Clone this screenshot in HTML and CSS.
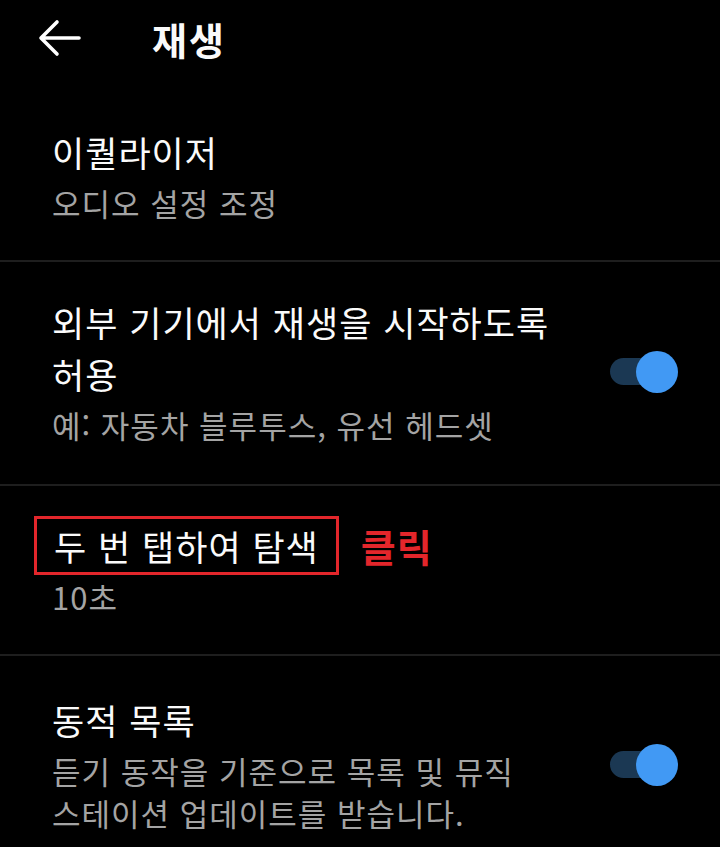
FILE: index.html
```html
<!DOCTYPE html>
<html lang="ko">
<head>
<meta charset="utf-8">
<meta name="viewport" content="width=device-width, initial-scale=1">
<link rel="stylesheet" href="styles.css">
</head>
<body>
    <div class="header">
        <svg class="back" width="44" height="40" viewBox="0 0 44 40">
            <path d="M41 20 H4 M19 4 L3 20 L19 36" fill="none" stroke="#fff" stroke-width="3.6" stroke-linecap="round" stroke-linejoin="round"/>
        </svg>
        <h1 class="title">재생</h1>
    </div>

    <div class="row first">
        <div class="text">
            <div class="name">이퀄라이저</div>
            <div class="sub">오디오 설정 조정</div>
        </div>
    </div>

    <div class="row wide">
        <div class="text">
            <div class="name">외부 기기에서 재생을 시작하도록<br>허용</div>
            <div class="sub">예: 자동차 블루투스, 유선 헤드셋</div>
        </div>
        <div class="toggle"><span class="knob"></span></div>
    </div>

    <div class="row">
        <div class="text">
            <div class="name"><span class="mark">두 번 탭하여 탐색</span><span class="click">클릭</span></div>
            <div class="sub">10초</div>
        </div>
    </div>

    <div class="row last">
        <div class="text">
            <div class="name">동적 목록</div>
            <div class="sub">듣기 동작을 기준으로 목록 및 뮤직<br>스테이션 업데이트를 받습니다.</div>
        </div>
        <div class="toggle"><span class="knob"></span></div>
    </div>
</body>
</html>
```

FILE: styles.css
```css
body{
    margin: 0;
    background-color: #000;
    color: #fafafa;
    font-family: "Noto Sans CJK KR", "Noto Sans", sans-serif;
    width: 720px;
    height: 847px;
    overflow: hidden;
}

.header{
    height: 80px;
    display: flex;
    align-items: center;
}
.back{
    margin-left: 38px;
    margin-top: -4px;
}
.title{
    margin: -3px 0 0 70px;
    font-size: 38px;
    font-weight: bold;
    letter-spacing: 2px;
    line-height: 1;
}

.row{
    display: flex;
    align-items: center;
    padding: 34px 50px 36px 52px;
    border-top: 2px solid #1e1e1e;
}
.row.first{
    border-top: none;
    padding-top: 46px;
}
.row.wide{
    padding-bottom: 38px;
}
.row.last{
    padding-top: 38px;
}
.text{
    flex: 1;
}
.name{
    font-size: 35px;
    letter-spacing: 1px;
    line-height: 52px;
}
.sub{
    font-size: 31px;
    letter-spacing: 1px;
    line-height: 42px;
    color: #a4a4a4;
    margin-top: 4px;
}

.mark{
    display: inline-block;
    border: 3px solid #e3262b;
    line-height: 53px;
    padding: 0 17px;
    margin: -4px 0 -3px -18px;
    vertical-align: top;
}
.click{
    display: inline-block;
    color: #e3262b;
    font-size: 38px;
    font-weight: bold;
    margin-left: 22px;
    vertical-align: top;
}

.toggle{
    position: relative;
    width: 60px;
    height: 27px;
    border-radius: 14px;
    background-color: #1b3853;
}
.knob{
    position: absolute;
    right: -8px;
    top: -7px;
    width: 42px;
    height: 42px;
    border-radius: 50%;
    background-color: #4199f4;
}
```
